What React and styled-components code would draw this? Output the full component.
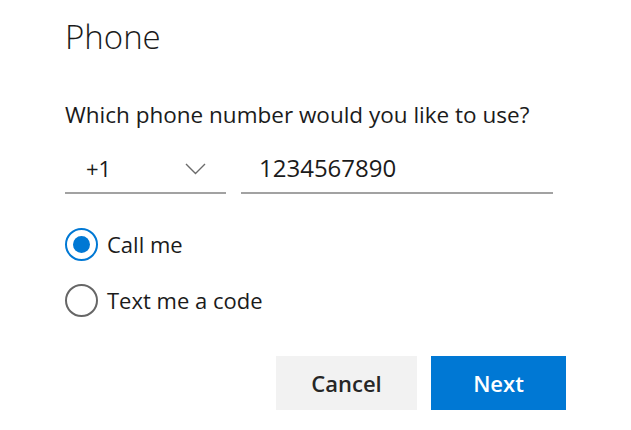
import React from 'react';
import styled, { createGlobalStyle } from 'styled-components';

const Global = createGlobalStyle`
  html, body { margin: 0; padding: 0; background: #fff; }
  body { font-family: "Open Sans", "Noto Sans", sans-serif; color: #1b1b1b; }
  * { box-sizing: border-box; }
`;

const Page = styled.div`
  width: 631px;
  height: 430px;
  padding: 17px 0 0 65px;
  overflow: hidden;
`;

const Title = styled.h1`
  margin: 0;
  font-size: 33px;
  font-weight: 300;
  line-height: 40px;
  color: #1b1b1b;
`;

const Prompt = styled.p`
  margin: 44px 0 0;
  font-size: 22.5px;
  line-height: 28px;
`;

const FieldRow = styled.div`
  display: flex;
  gap: 15px;
  margin-top: 21px;
`;

const Field = styled.div`
  width: ${p => p.$w}px;
  height: 44px;
  border-bottom: 2px solid #a2a2a2;
  display: flex;
  justify-content: space-between;
  align-items: flex-start;
  padding: ${p => p.$pad};
  font-size: ${p => p.$fs}px;
  line-height: 30px;
  color: #1b1b1b;
`;

const Chevron = styled.svg`
  margin-top: 10px;
  flex: none;
`;

const Options = styled.div`
  display: flex;
  flex-direction: column;
  gap: 16px;
  margin-top: 30px;
`;

const Option = styled.label`
  display: flex;
  align-items: center;
  gap: 9px;
  height: 40px;
  font-size: 22px;
  line-height: 28px;
  cursor: pointer;
`;

const Radio = styled.span`
  width: 33px;
  height: 33px;
  border-radius: 50%;
  border: 2px solid ${p => (p.$checked ? '#0078d4' : '#666666')};
  display: flex;
  align-items: center;
  justify-content: center;
  flex: none;
`;

const Dot = styled.span`
  width: 17px;
  height: 17px;
  border-radius: 50%;
  background: #0078d4;
`;

const Actions = styled.div`
  display: flex;
  justify-content: flex-end;
  gap: 14px;
  width: 501px;
  margin-top: 36px;
`;

const Button = styled.button`
  width: ${p => p.$w}px;
  height: 54px;
  border: none;
  padding: 0;
  font-family: inherit;
  font-size: 22px;
  font-weight: 600;
  background: ${p => (p.$primary ? '#0078d4' : '#f2f2f2')};
  color: ${p => (p.$primary ? '#ffffff' : '#262626')};
  cursor: pointer;
`;

export default function App() {
  return (
    <>
      <Global />
      <Page>
        <Title>Phone</Title>
        <Prompt>Which phone number would you like to use?</Prompt>
        <FieldRow>
          <Field $w={161} $fs={22} $pad="3px 20px 0 21px">
            <span>+1</span>
            <Chevron width="21" height="12" viewBox="0 0 21 12">
              <path d="M1 1 L10.5 10.5 L20 1" fill="none" stroke="#6b6b6b" strokeWidth="1.4" />
            </Chevron>
          </Field>
          <Field $w={312} $fs={24} $pad="3px 0 0 18px">
            <span>1234567890</span>
          </Field>
        </FieldRow>
        <Options>
          <Option>
            <Radio $checked><Dot /></Radio>
            Call me
          </Option>
          <Option>
            <Radio />
            Text me a code
          </Option>
        </Options>
        <Actions>
          <Button $w={141}>Cancel</Button>
          <Button $w={135} $primary>Next</Button>
        </Actions>
      </Page>
    </>
  );
}
